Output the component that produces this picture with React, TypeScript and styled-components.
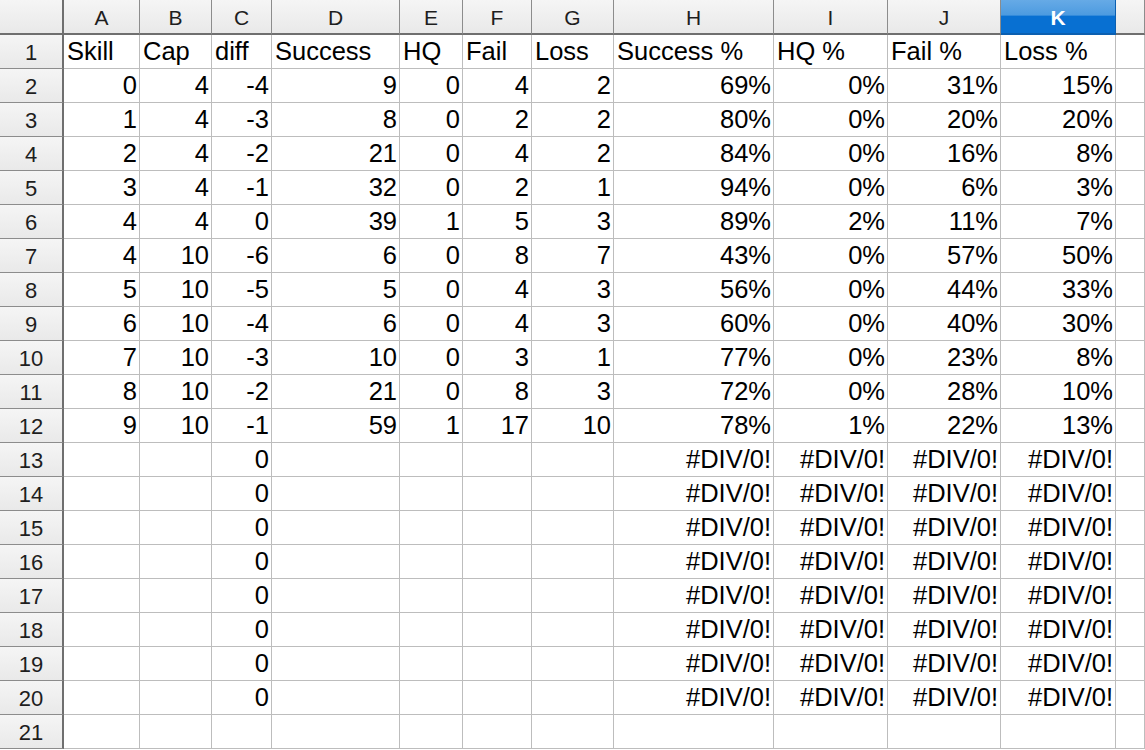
import React from "react";
import styled, { createGlobalStyle, css } from "styled-components";

const GlobalStyle = createGlobalStyle`
  html, body {
    margin: 0;
    padding: 0;
    background: #ffffff;
    overflow: hidden;
  }
`;

const columns = ["A", "B", "C", "D", "E", "F", "G", "H", "I", "J", "K", ""];
const widths = [64, 76, 72, 60, 128, 63, 69, 82, 160, 114, 113, 115];
const selectedCol = "K";

type CellValue = string | number | null;

const headerRow: CellValue[] = [
  "Skill", "Cap", "diff", "Success", "HQ", "Fail", "Loss",
  "Success %", "HQ %", "Fail %", "Loss %", null,
];

const dataRows: CellValue[][] = [
  [0, 4, -4, 9, 0, 4, 2, "69%", "0%", "31%", "15%"],
  [1, 4, -3, 8, 0, 2, 2, "80%", "0%", "20%", "20%"],
  [2, 4, -2, 21, 0, 4, 2, "84%", "0%", "16%", "8%"],
  [3, 4, -1, 32, 0, 2, 1, "94%", "0%", "6%", "3%"],
  [4, 4, 0, 39, 1, 5, 3, "89%", "2%", "11%", "7%"],
  [4, 10, -6, 6, 0, 8, 7, "43%", "0%", "57%", "50%"],
  [5, 10, -5, 5, 0, 4, 3, "56%", "0%", "44%", "33%"],
  [6, 10, -4, 6, 0, 4, 3, "60%", "0%", "40%", "30%"],
  [7, 10, -3, 10, 0, 3, 1, "77%", "0%", "23%", "8%"],
  [8, 10, -2, 21, 0, 8, 3, "72%", "0%", "28%", "10%"],
  [9, 10, -1, 59, 1, 17, 10, "78%", "1%", "22%", "13%"],
];

const divRow: CellValue[] = [null, null, 0, null, null, null, null, "#DIV/0!", "#DIV/0!", "#DIV/0!", "#DIV/0!"];

const rows: CellValue[][] = [
  headerRow,
  ...dataRows,
  ...Array.from({ length: 8 }, () => divRow),
  Array(11).fill(null),
];

const isNumeric = (v: CellValue) =>
  typeof v === "number" || (typeof v === "string" && (/^-?\d+%?$/.test(v) || v.startsWith("#")));

export default function App() {
  return (
    <>
      <GlobalStyle />
      <Styled.Sheet $template={widths.map((w) => `${w}px`).join(" ") + " 1fr"}>
        <Styled.Corner />
        {columns.map((c, i) => (
          <Styled.ColHeader key={`h${i}`} $selected={c === selectedCol}>
            {c}
          </Styled.ColHeader>
        ))}
        {rows.map((row, r) => (
          <React.Fragment key={r}>
            <Styled.RowHeader>{r + 1}</Styled.RowHeader>
            {columns.map((_, c) => {
              const v = c < row.length ? row[c] : null;
              return (
                <Styled.Cell key={c} $right={v !== null && isNumeric(v)}>
                  {v}
                </Styled.Cell>
              );
            })}
          </React.Fragment>
        ))}
      </Styled.Sheet>
    </>
  );
}

const headerBase = css`
  background: linear-gradient(#f5f5f5, #e9e9e9);
  color: #1e1e1e;
  font-family: "Liberation Sans", Arial, sans-serif;
  font-size: 21px;
  display: flex;
  align-items: center;
  justify-content: center;
  box-sizing: border-box;
`;

const Styled = {
  Sheet: styled.div<{ $template: string }>`
    display: grid;
    grid-template-columns: ${(p) => p.$template};
    grid-template-rows: 35px;
    grid-auto-rows: 34px;
    width: 1145px;
    height: 750px;
    overflow: hidden;
  `,
  Corner: styled.div`
    ${headerBase};
    border-right: 2px solid #6f6f6f;
    border-bottom: 2px solid #6f6f6f;
  `,
  ColHeader: styled.div<{ $selected: boolean }>`
    ${headerBase};
    border-right: 1px solid #8c8c8c;
    border-bottom: 2px solid #6f6f6f;
    padding-top: 2px;
    ${(p) =>
      p.$selected &&
      css`
        background: linear-gradient(#66aae6 0%, #4d9be0 45%, #0870d2 50%, #0870d2 100%);
        color: #ffffff;
        font-weight: bold;
        border-right-color: #0b5fb0;
        border-bottom-color: #0b5fb0;
      `}
  `,
  RowHeader: styled.div`
    ${headerBase};
    font-size: 22px;
    border-right: 2px solid #6f6f6f;
    border-bottom: 1px solid #8c8c8c;
    padding-top: 2px;
  `,
  Cell: styled.div<{ $right: boolean }>`
    display: flex;
    align-items: flex-end;
    justify-content: ${(p) => (p.$right ? "flex-end" : "flex-start")};
    box-sizing: border-box;
    border-right: 1px solid #bdbdbd;
    border-bottom: 1px solid #bdbdbd;
    padding: 0 2px 3px 3px;
    font-family: "Liberation Sans", Arial, sans-serif;
    font-size: 25.5px;
    line-height: 28px;
    color: #000000;
    white-space: nowrap;
    overflow: hidden;
  `,
};
